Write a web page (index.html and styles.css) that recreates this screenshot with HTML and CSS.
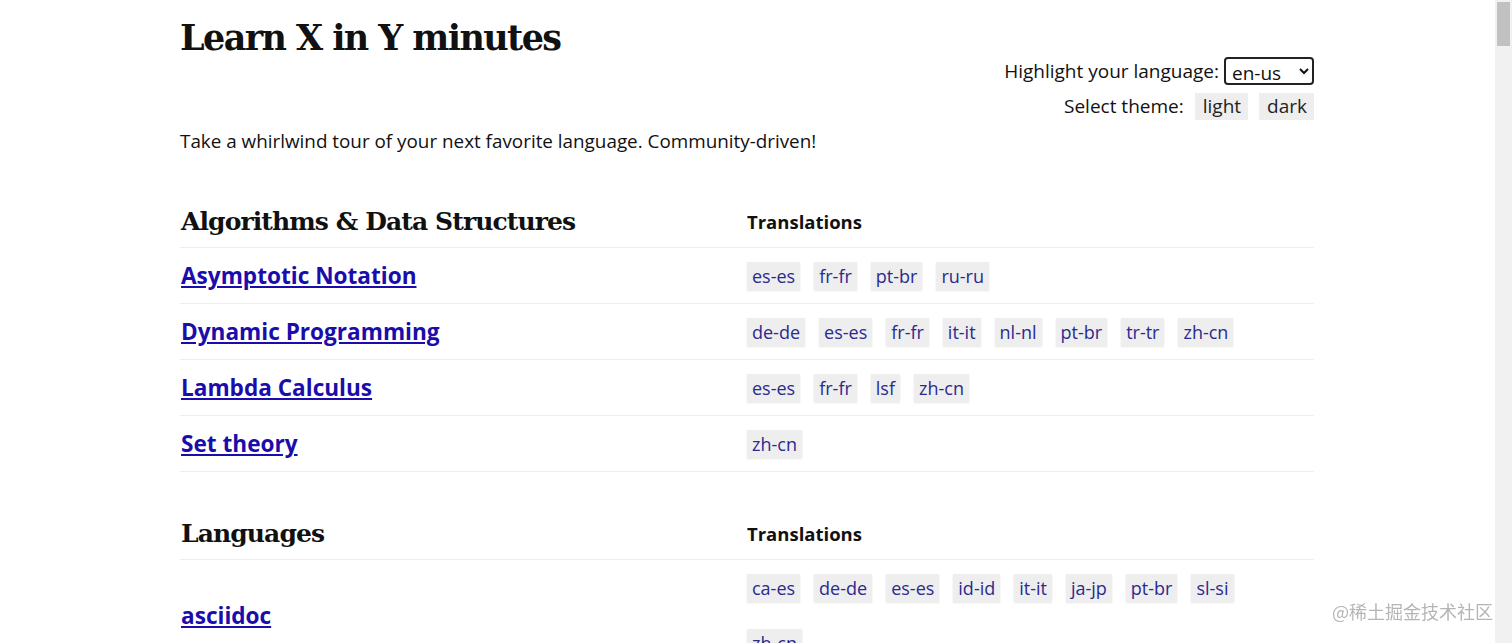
FILE: index.html
```html
<!DOCTYPE html>
<html>
<head>
<meta charset="utf-8">
<title>Learn X in Y minutes</title>
<link rel="stylesheet" href="styles.css">
</head>
<body>
<div id="wrap">
	<div id="header">
		<h1 class="title">Learn X in Y minutes</h1>
		<div id="prefs">
			<div class="pref">
				<label for="lang">Highlight your language:</label>
				<select id="lang"><option>en-us</option></select>
			</div>
			<div class="pref">
				<span>Select theme:</span>
				<button class="theme">light</button>
				<button class="theme">dark</button>
			</div>
		</div>
	</div>
	<p class="tagline">Take a whirlwind tour of your next favorite language. Community-driven!</p>

	<table class="catalog">
		<tr class="head">
			<th class="name"><h2>Algorithms &amp; Data Structures</h2></th>
			<th class="trans">Translations</th>
		</tr>
		<tr>
			<td class="name"><a href="#">Asymptotic Notation</a></td>
			<td class="trans"><a class="tag" href="#">es-es</a><a class="tag" href="#">fr-fr</a><a class="tag" href="#">pt-br</a><a class="tag" href="#">ru-ru</a></td>
		</tr>
		<tr>
			<td class="name"><a href="#">Dynamic Programming</a></td>
			<td class="trans"><a class="tag" href="#">de-de</a><a class="tag" href="#">es-es</a><a class="tag" href="#">fr-fr</a><a class="tag" href="#">it-it</a><a class="tag" href="#">nl-nl</a><a class="tag" href="#">pt-br</a><a class="tag" href="#">tr-tr</a><a class="tag" href="#">zh-cn</a></td>
		</tr>
		<tr>
			<td class="name"><a href="#">Lambda Calculus</a></td>
			<td class="trans"><a class="tag" href="#">es-es</a><a class="tag" href="#">fr-fr</a><a class="tag" href="#">lsf</a><a class="tag" href="#">zh-cn</a></td>
		</tr>
		<tr>
			<td class="name"><a href="#">Set theory</a></td>
			<td class="trans"><a class="tag" href="#">zh-cn</a></td>
		</tr>
	</table>

	<table class="catalog">
		<tr class="head">
			<th class="name"><h2>Languages</h2></th>
			<th class="trans">Translations</th>
		</tr>
		<tr>
			<td class="name"><a href="#">asciidoc</a></td>
			<td class="trans"><a class="tag" href="#">ca-es</a><a class="tag" href="#">de-de</a><a class="tag" href="#">es-es</a><a class="tag" href="#">id-id</a><a class="tag" href="#">it-it</a><a class="tag" href="#">ja-jp</a><a class="tag" href="#">pt-br</a><a class="tag" href="#">sl-si</a><a class="tag" href="#">zh-cn</a></td>
		</tr>
		<tr>
			<td class="name"><a href="#">assemblyscript</a></td>
			<td class="trans"><a class="tag" href="#">es-es</a></td>
		</tr>
	</table>
</div>
<div id="scrollbar"><div class="thumb"></div></div>
<div id="watermark">@稀土掘金技术社区</div>
</body>
</html>
```

FILE: styles.css
```css
html, body {
	margin: 0;
	padding: 0;
	background: #fff;
	color: #111;
	font-family: "Open Sans", "Noto Sans", sans-serif;
}
#wrap {
	width: 1134px;
	margin: 0 0 0 180px;
}
#header {
	display: flex;
	justify-content: space-between;
	align-items: flex-start;
}
.title {
	font-family: "DejaVu Serif", serif;
	font-size: 35px;
	font-weight: bold;
	letter-spacing: -1.6px;
	margin: 14px 0 0 0;
	line-height: 48px;
}
#prefs {
	margin-top: 57px;
	display: flex;
	flex-direction: column;
	align-items: flex-end;
	gap: 7px;
	font-size: 19px;
}
.pref {
	display: flex;
	align-items: center;
	gap: 5px;
	height: 28px;
}
#lang {
	font-family: "Open Sans", sans-serif;
	font-size: 19px;
	width: 90px;
	height: 28px;
	border: 2px solid #222;
	border-radius: 4px;
	background: #fff;
	color: #111;
	padding: 0 2px;
}
.theme {
	font-family: "Open Sans", sans-serif;
	font-size: 19px;
	color: #222;
	background: #eee;
	border: none;
	padding: 0 7px 0 8px;
	height: 27px;
	line-height: 27px;
	margin-left: 6px;
}
.tagline {
	font-size: 18.85px;
	margin: 7px 0 0 0;
	line-height: 28px;
}
.catalog {
	width: 100%;
	border-collapse: collapse;
	margin-top: 40px;
}
.catalog + .catalog {
	margin-top: 35px;
}
.catalog th {
	text-align: left;
	vertical-align: middle;
	height: 52px;
	border-bottom: 1px solid #eee;
	padding: 0;
}
.catalog th.name h2 {
	font-family: "DejaVu Serif", serif;
	font-size: 25px;
	letter-spacing: -0.9px;
	margin: 0 0 0 1px;
}
.catalog th.trans {
	font-size: 18.5px;
	font-weight: bold;
}
.catalog td {
	border-bottom: 1px solid #eee;
	height: 55px;
	padding: 0;
	vertical-align: middle;
}
.catalog .name {
	width: 567px;
}
.catalog td.name a {
	color: #1a0dab;
	font-weight: bold;
	font-size: 22.6px;
	margin-left: 1px;
}
.catalog td.trans {
	padding: 0;
	line-height: 0;
}
.tag {
	display: inline-block;
	line-height: 28px;
	font-size: 18px;
	color: #2a2a8f;
	background: #eee;
	padding: 0 5px;
	margin: 14px 14px 13px 0;
	text-decoration: none;
	box-shadow: 0 1px 2px rgba(0,0,0,0.1);
}
#scrollbar {
	position: fixed;
	top: 0;
	right: 0;
	width: 17px;
	height: 100%;
	background: #f1f1f1;
}
#scrollbar .thumb {
	margin: 2px 2px 0 2px;
	height: 44px;
	background: #c1c1c1;
}
#watermark {
	position: fixed;
	right: 19px;
	bottom: 19px;
	font-family: "Noto Sans CJK SC", sans-serif;
	font-size: 18px;
	color: rgba(120,120,120,0.55);
}
```
